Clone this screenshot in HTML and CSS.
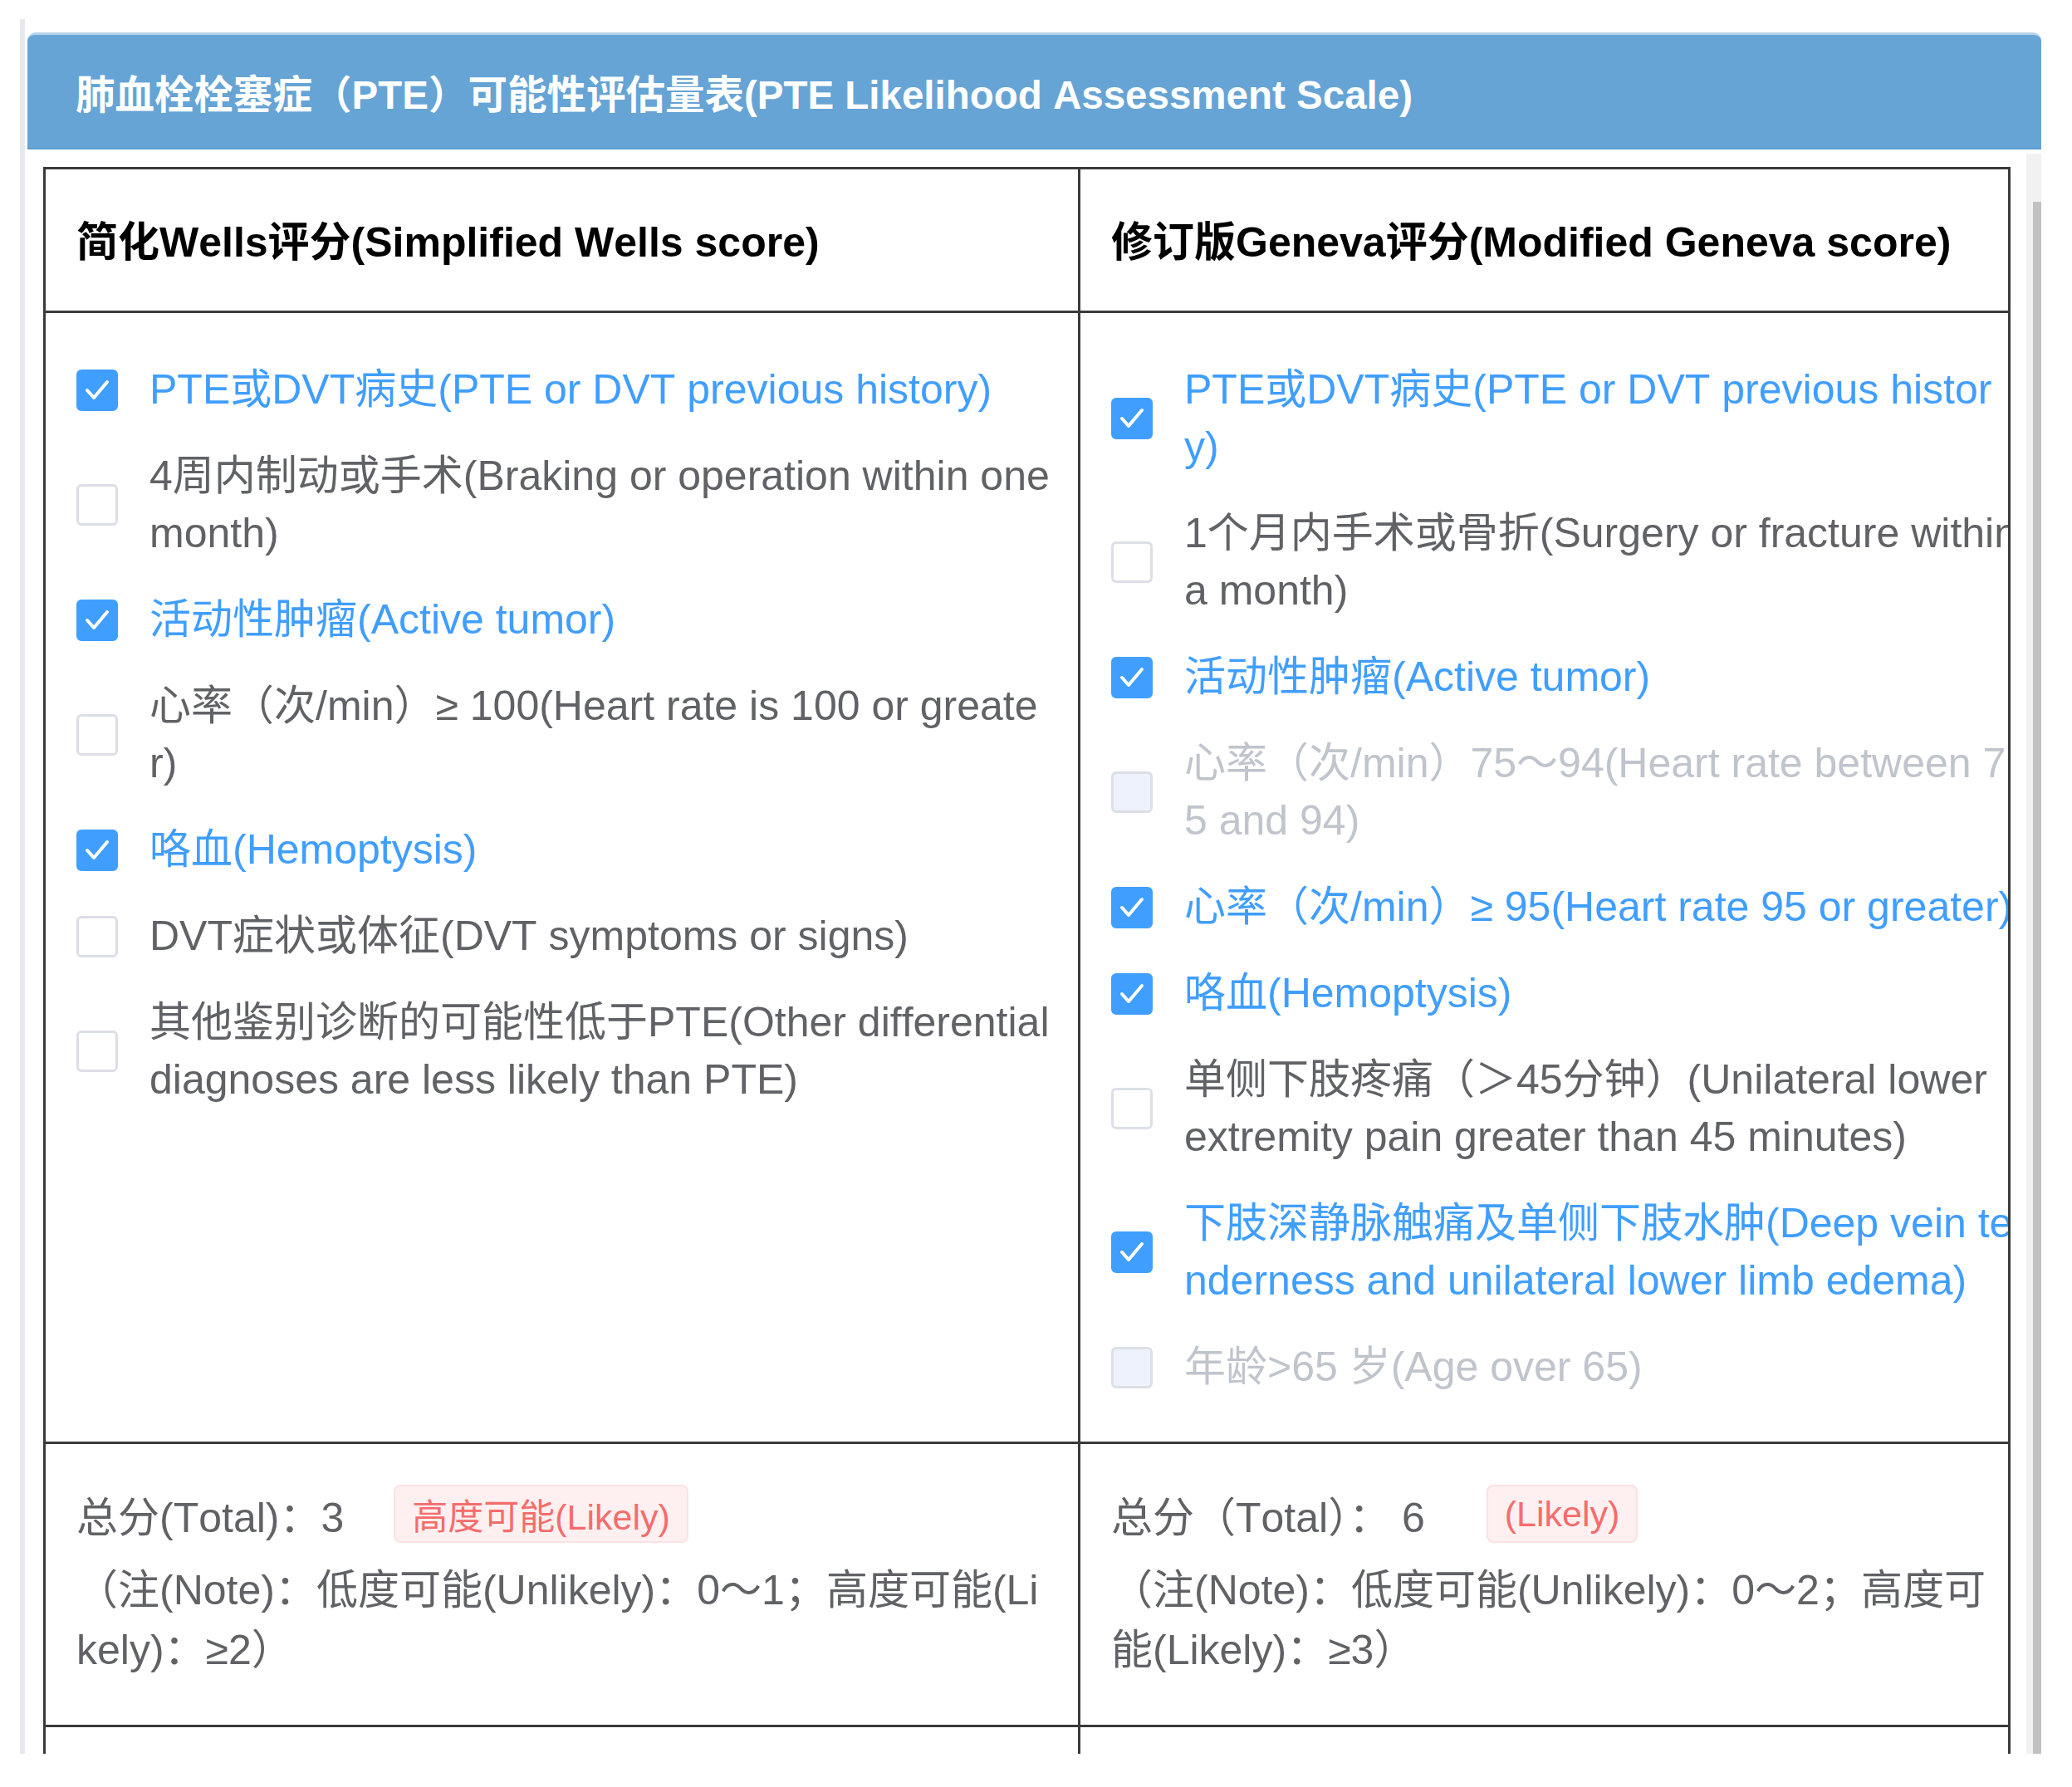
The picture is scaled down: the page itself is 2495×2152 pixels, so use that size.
FILE: index.html
```html
<!DOCTYPE html>
<html lang="zh-CN">
<head>
<meta charset="utf-8">
<title>PTE Likelihood Assessment Scale</title>
<link rel="stylesheet" href="styles.css">
</head>
<body>
<div class="viewport">
  <div class="title-bar">肺血栓栓塞症（PTE）可能性评估量表(PTE Likelihood Assessment Scale)</div>
  <div class="scroll">
    <div class="scroll-content">
      <div class="score-table">
        <div class="cell th">简化Wells评分(Simplified Wells score)</div>
        <div class="cell th">修订版Geneva评分(Modified Geneva score)</div>

        <div class="cell options-cell">
          <div class="option checked"><span class="box"><svg viewBox="0 0 44 44"><path d="M10 22 L18 31 L34 12"/></svg></span><span class="label">PTE或DVT病史(PTE or DVT previous history)</span></div>
          <div class="option"><span class="box"></span><span class="label">4周内制动或手术(Braking or operation within one<br>month)</span></div>
          <div class="option checked"><span class="box"><svg viewBox="0 0 44 44"><path d="M10 22 L18 31 L34 12"/></svg></span><span class="label">活动性肿瘤(Active tumor)</span></div>
          <div class="option"><span class="box"></span><span class="label">心率（次/min）≥ 100(Heart rate is 100 or greate<br>r)</span></div>
          <div class="option checked"><span class="box"><svg viewBox="0 0 44 44"><path d="M10 22 L18 31 L34 12"/></svg></span><span class="label">咯血(Hemoptysis)</span></div>
          <div class="option"><span class="box"></span><span class="label">DVT症状或体征(DVT symptoms or signs)</span></div>
          <div class="option"><span class="box"></span><span class="label">其他鉴别诊断的可能性低于PTE(Other differential<br>diagnoses are less likely than PTE)</span></div>
        </div>

        <div class="cell options-cell">
          <div class="option checked"><span class="box"><svg viewBox="0 0 44 44"><path d="M10 22 L18 31 L34 12"/></svg></span><span class="label">PTE或DVT病史(PTE or DVT previous histor<br>y)</span></div>
          <div class="option"><span class="box"></span><span class="label">1个月内手术或骨折(Surgery or fracture within<br>a month)</span></div>
          <div class="option checked"><span class="box"><svg viewBox="0 0 44 44"><path d="M10 22 L18 31 L34 12"/></svg></span><span class="label">活动性肿瘤(Active tumor)</span></div>
          <div class="option disabled"><span class="box"></span><span class="label">心率（次/min）75～94(Heart rate between 7<br>5 and 94)</span></div>
          <div class="option checked"><span class="box"><svg viewBox="0 0 44 44"><path d="M10 22 L18 31 L34 12"/></svg></span><span class="label">心率（次/min）≥ 95(Heart rate 95 or greater)</span></div>
          <div class="option checked"><span class="box"><svg viewBox="0 0 44 44"><path d="M10 22 L18 31 L34 12"/></svg></span><span class="label">咯血(Hemoptysis)</span></div>
          <div class="option"><span class="box"></span><span class="label">单侧下肢疼痛（＞45分钟）(Unilateral lower<br>extremity pain greater than 45 minutes)</span></div>
          <div class="option checked"><span class="box"><svg viewBox="0 0 44 44"><path d="M10 22 L18 31 L34 12"/></svg></span><span class="label">下肢深静脉触痛及单侧下肢水肿(Deep vein te<br>nderness and unilateral lower limb edema)</span></div>
          <div class="option disabled"><span class="box"></span><span class="label">年龄&gt;65 岁(Age over 65)</span></div>
        </div>

        <div class="cell total-cell">
          <div class="total-line">总分(Total)：3<span class="tag">高度可能(Likely)</span></div>
          <div class="note">（注(Note)：低度可能(Unlikely)：0～1；高度可能(Li<br>kely)：≥2）</div>
        </div>
        <div class="cell total-cell">
          <div class="total-line">总分（Total）： 6 <span class="tag">(Likely)</span></div>
          <div class="note">（注(Note)：低度可能(Unlikely)：0～2；高度可<br>能(Likely)：≥3）</div>
        </div>

        <div class="cell"></div>
        <div class="cell"></div>
      </div>
    </div>
    <div class="scrollbar"><div class="thumb"></div></div>
  </div>
</div>
</body>
</html>
```
FILE: styles.css
```css
html, body {
  margin: 0;
  padding: 0;
  background: #ffffff;
}

body {
  font-family: "Liberation Sans", "Noto Sans CJK SC", sans-serif;
  font-kerning: none;
}

.viewport {
  margin: 23px 0 0 24px;
  width: 2434px;
  height: 2089px;
  box-sizing: border-box;
  border-left: 6px solid #e6e8ec;
  padding: 16px 0 0 3px;
  display: flex;
  flex-direction: column;
  overflow: hidden;
}

.title-bar {
  flex: none;
  height: 141px;
  box-sizing: border-box;
  background: #66a4d5;
  border-top: 3px solid #b7d3ec;
  border-bottom: 2px solid #5c9ccf;
  border-radius: 10px 10px 0 0;
  padding-left: 58px;
  display: flex;
  align-items: center;
  color: #ffffff;
  font-size: 47.5px;
  font-weight: bold;
  white-space: nowrap;
}

.scroll {
  flex: 1;
  min-height: 0;
  margin-top: 5px;
  display: flex;
}

.scroll-content {
  flex: 1;
  padding: 16px 0 0 19px;
  overflow: hidden;
}

.scrollbar {
  flex: none;
  width: 18px;
  background: #f1f1f1;
  padding-top: 58px;
  box-sizing: border-box;
  display: flex;
  flex-direction: column;
  align-items: flex-end;
}

.thumb {
  flex: 1;
  width: 10px;
  background: #c1c1c1;
}

.score-table {
  display: grid;
  grid-template-columns: 1243px 1117px;
  grid-template-rows: 170px auto auto 200px;
  gap: 3px;
  padding: 3px;
  width: max-content;
  background: #3a3a3a;
}

.cell {
  background: #ffffff;
}

.th {
  display: flex;
  align-items: center;
  padding-left: 37px;
  padding-bottom: 4px;
  font-size: 50px;
  font-weight: bold;
  color: #000000;
  white-space: nowrap;
}

.options-cell {
  padding: 58px 0 55px 37px;
  overflow: hidden;
  display: flex;
  flex-direction: column;
  gap: 35px;
}

.option {
  display: flex;
  align-items: center;
}

.box {
  flex: none;
  width: 50px;
  height: 50px;
  box-sizing: border-box;
  border: 3px solid #dcdfe6;
  border-radius: 6px;
  margin-right: 38px;
  background: #ffffff;
  display: flex;
}

.box svg {
  width: 100%;
  height: 100%;
}

.box path {
  fill: none;
  stroke: #ffffff;
  stroke-width: 4;
  stroke-linecap: round;
  stroke-linejoin: round;
}

.option.checked .box {
  background: #409eff;
  border-color: #409eff;
}

.option.disabled .box {
  background: #edf2fc;
  border-color: #dcdfe6;
}

.label {
  font-size: 50px;
  line-height: 69px;
  color: #606266;
  white-space: nowrap;
}

.option.checked .label {
  color: #409eff;
}

.option.disabled .label {
  color: #c0c4cc;
}

.total-cell {
  padding: 49px 25px 54px 37px;
  font-size: 50px;
  color: #606266;
  overflow: hidden;
}

.total-line {
  display: flex;
  align-items: center;
  height: 70px;
  white-space: pre;
}

.tag {
  margin-left: 60px;
  height: 70px;
  box-sizing: border-box;
  padding: 0 20px;
  border: 2px solid #fde2e2;
  border-radius: 8px;
  background: #fef0f0;
  color: #f56c6c;
  font-size: 43px;
  display: flex;
  align-items: center;
}

.note {
  margin-top: 21px;
  line-height: 72px;
  white-space: nowrap;
}
```
